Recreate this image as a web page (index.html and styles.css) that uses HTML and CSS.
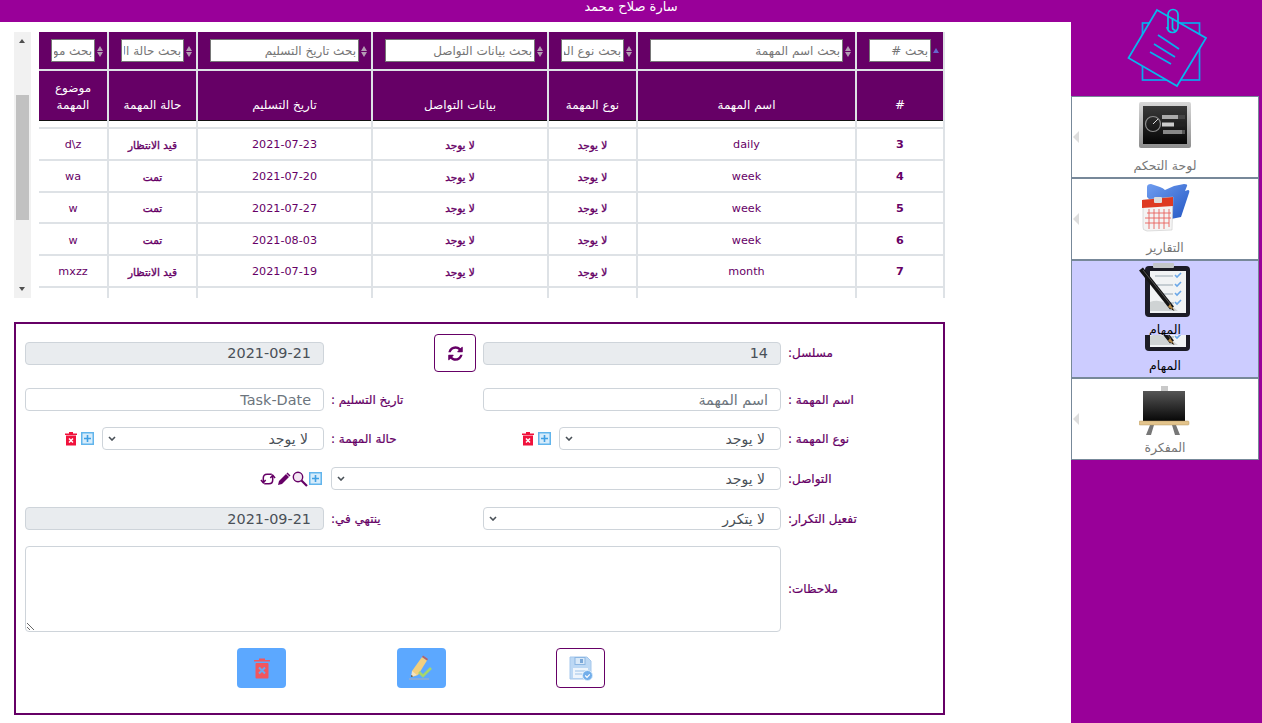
FILE: index.html
```html
<!DOCTYPE html>
<html lang="ar" dir="rtl">
<head>
<meta charset="utf-8">
<title>المهام</title>
<link rel="stylesheet" href="styles.css">
</head>
<body>
<svg class="defs" aria-hidden="true">
  <defs>
    <linearGradient id="logoGrad" x1="0" y1="0" x2="0" y2="1"><stop offset="0" stop-color="#00d8e8"/><stop offset="1" stop-color="#0a8cf5"/></linearGradient>
    <linearGradient id="dashGrad" x1="0" y1="0" x2="0" y2="1"><stop offset="0" stop-color="#3a3a3a"/><stop offset="1" stop-color="#050505"/></linearGradient>
    <linearGradient id="bevelGrad" x1="0" y1="0" x2="0" y2="1"><stop offset="0" stop-color="#d8d8d8"/><stop offset="1" stop-color="#8d8d8d"/></linearGradient>
    <linearGradient id="boardGrad" x1="0" y1="0" x2="0" y2="1"><stop offset="0" stop-color="#565656"/><stop offset="1" stop-color="#050505"/></linearGradient>
    <linearGradient id="folderGrad" x1="0" y1="0" x2="1" y2="1"><stop offset="0" stop-color="#6f9df0"/><stop offset="1" stop-color="#2457c4"/></linearGradient>
    <symbol id="clipboard" viewBox="0 0 52 58">
      <rect x="6" y="5" width="45" height="51" rx="4" fill="#1c1c26"/>
      <rect x="11" y="10" width="36" height="42" fill="#f1f3f4"/>
      <path d="M11 41q12-5 28 9H11z" fill="#cfd3d4"/>
      <rect x="14" y="2" width="21" height="5" rx="1" fill="#c3c6c8"/>
      <path d="M16 15h18M18 24h16M24 33h10M30 42h5" stroke="#c5cdd2" stroke-width="2"/>
      <path d="M36 14l2 2 4-4M36 23l2 2 4-4M36 32l2 2 4-4M36 41l2 2 4-4" stroke="#6aa7e8" stroke-width="1.6" fill="none"/>
      <path d="M2 8l31 39" stroke="#141414" stroke-width="5"/>
      <path d="M4 9l28 35" stroke="#555" stroke-width="1"/>
      <path d="M31 43l4.500 6.500-6.500-3.500z" fill="#b78a45"/>
      <path d="M33 47l2.500 3-3-1.500z" fill="#111"/>
    </symbol>
  </defs>
</svg>

<aside class="sidebar">
  <div class="logo">
    <svg width="80" height="80" viewBox="56 8 80 80" fill="none" stroke="url(#logoGrad)" stroke-width="1.700">
      <rect x="71.500" y="23" width="57" height="57" stroke="#09a8ef"/>
      <path d="M86 10l49 28-29 48-48.500-28z" fill="#990099" stroke="#06b8ee"/>
      <path d="M97 30V14.500a5 5 0 0 1 10 0V27a5.500 5.500 0 0 1-11 0 5.500 5.500 0 0 0 11 0M101.500 18v10a2.500 2.500 0 0 0 3 2" stroke="#06c4ea"/>
      <path d="M87 35l21 14M83 44l21 13M79 52l21 12" stroke="#07b0ef"/>
    </svg>
  </div>
  <nav class="menu">
    <a class="menu-item">
      <svg class="menu-icon" viewBox="0 0 52 58">
        <rect x="0" y="5" width="52" height="46" rx="2" fill="url(#bevelGrad)"/>
        <rect x="4" y="9" width="44" height="38" fill="url(#dashGrad)"/>
        <circle cx="14" cy="27" r="7.500" fill="none" stroke="#8d8d8d" stroke-width="1.200"/>
        <path d="M14 27l5-5" stroke="#ddd"/>
        <rect x="23" y="18" width="23" height="4" fill="#444"/><rect x="23" y="18" width="16" height="4" fill="#aaa"/>
        <rect x="23" y="25.500" width="23" height="4" fill="#222"/><rect x="23" y="25.500" width="12" height="4" fill="#ccc"/>
        <rect x="24" y="33" width="22" height="4" fill="#555"/><rect x="24" y="33" width="19" height="4" fill="#888"/>
      </svg>
      <span class="menu-label">لوحة التحكم</span>
    </a>
    <a class="menu-item">
      <svg class="menu-icon" viewBox="0 0 52 58">
        <path d="M8 8q0-3 4-3l9 3q3 1 5 3l9-4 10-2q4 0 3 2l-2 5 3-1q2 0 1 3l-8 24-10 2-14-12-10-10z" fill="url(#folderGrad)"/>
        <path d="M4 21l30-3-1 33-25 1q-5-1-4-4z" fill="#f4f4f4" stroke="#c9c9c9" stroke-width=".6"/>
        <path d="M3 21l31-3v9L3 29z" fill="#de3a22"/>
        <rect x="15" y="18" width="8" height="6" rx="1" fill="#ddd"/>
        <path d="M8 34h24M6 39h26M6 44h24M10 30v20M15 30v20M20 30v20M25 30v20M30 30v18" stroke="#e8605c" stroke-width=".9"/>
      </svg>
      <span class="menu-label">التقارير</span>
    </a>
    <a class="menu-item active">
      <svg class="menu-icon" viewBox="0 0 52 58"><use href="#clipboard"/></svg>
      <span class="menu-label">المهام</span>
      <svg class="menu-icon slice" viewBox="0 40 52 17"><use href="#clipboard" width="52" height="58"/></svg>
      <span class="menu-label second">المهام</span>
    </a>
    <a class="menu-item">
      <svg class="menu-icon" viewBox="0 0 52 58">
        <rect x="22" y="7" width="7" height="6" fill="#c9c9c9"/>
        <rect x="4" y="12" width="42" height="31" fill="url(#boardGrad)"/>
        <path d="M11 46l-4 10h5l3-10zM37 46l4 10h-5l-3-10z" fill="#777"/>
        <rect x="0" y="42" width="50" height="4" rx="1" fill="#e3c48c" stroke="#b79a65" stroke-width=".5"/>
      </svg>
      <span class="menu-label">المفكرة</span>
    </a>
  </nav>
</aside>

<div class="content">
  <header class="topbar">سارة صلاح محمد</header>
  <main class="main">
    <section class="grid-panel">
      <div class="table-clip">
        <table class="tasks">
          <colgroup>
            <col class="c-num"><col class="c-name"><col class="c-type"><col class="c-contact"><col class="c-date"><col class="c-status"><col class="c-subject">
          </colgroup>
          <thead>
            <tr class="search-row">
              <th class="sort-active"><input type="text" placeholder="بحث #"></th>
              <th><input type="text" placeholder="بحث اسم المهمة"></th>
              <th><input type="text" placeholder="بحث نوع المهمة"></th>
              <th><input type="text" placeholder="بحث بيانات التواصل"></th>
              <th><input type="text" placeholder="بحث تاريخ التسليم"></th>
              <th><input type="text" placeholder="بحث حالة المهمة"></th>
              <th><input type="text" placeholder="بحث موضوع المهمة"></th>
            </tr>
            <tr class="title-row">
              <th>#</th><th>اسم المهمة</th><th>نوع المهمة</th><th>بيانات التواصل</th><th>تاريخ التسليم</th><th>حالة المهمة</th><th>موضوع المهمة</th>
            </tr>
          </thead>
          <tbody>
            <tr class="sliver"><td></td><td></td><td></td><td></td><td></td><td></td><td></td></tr>
            <tr><td class="num">3</td><td>daily</td><td class="b">لا يوجد</td><td class="b">لا يوجد</td><td>2021-07-23</td><td class="b">قيد الانتظار</td><td>d\z</td></tr>
            <tr><td class="num">4</td><td>week</td><td class="b">لا يوجد</td><td class="b">لا يوجد</td><td>2021-07-20</td><td class="b">تمت</td><td>wa</td></tr>
            <tr><td class="num">5</td><td>week</td><td class="b">لا يوجد</td><td class="b">لا يوجد</td><td>2021-07-27</td><td class="b">تمت</td><td>w</td></tr>
            <tr><td class="num">6</td><td>week</td><td class="b">لا يوجد</td><td class="b">لا يوجد</td><td>2021-08-03</td><td class="b">تمت</td><td>w</td></tr>
            <tr><td class="num">7</td><td>month</td><td class="b">لا يوجد</td><td class="b">لا يوجد</td><td>2021-07-19</td><td class="b">قيد الانتظار</td><td>mxzz</td></tr>
            <tr><td></td><td></td><td></td><td></td><td></td><td></td><td></td></tr>
          </tbody>
        </table>
      </div>
      <div class="scrollbar" aria-hidden="true">
        <span class="sb-btn up"></span>
        <span class="sb-track"><span class="sb-thumb"></span></span>
        <span class="sb-btn down"></span>
      </div>
    </section>

    <form class="task-form">
      <label class="lbl">مسلسل:</label>
      <input class="ctl" type="text" value="14" disabled>
      <button class="btn-outline refresh" type="button" aria-label="تحديث">
        <svg width="17" height="17" viewBox="0 0 1792 1792"><path fill="#660066" d="M1639 1056q0 5-1 7-64 268-268 434.500t-478 166.500q-146 0-282.500-55t-243.500-157l-129 129q-19 19-45 19t-45-19-19-45v-448q0-26 19-45t45-19h448q26 0 45 19t19 45-19 45l-137 137q71 66 161 102t187 36q134 0 250-65t186-179q11-17 53-117 8-23 30-23h192q13 0 22.500 9.500t9.500 22.500zm25-800v448q0 26-19 45t-45 19h-448q-26 0-45-19t-19-45 19-45l138-138q-148-137-349-137-134 0-250 65t-186 179q-11 17-53 117-8 23-30 23h-199q-13 0-22.500-9.500t-9.500-22.500v-7q65-268 270-434.500t480-166.500q146 0 284 55.500t245 156.500l130-129q19-19 45-19t45 19 19 45z"/></svg>
      </button>
      <input class="ctl" type="text" value="2021-09-21" disabled>

      <label class="lbl">اسم المهمة :</label>
      <input class="ctl" type="text" placeholder="اسم المهمة">
      <label class="lbl">تاريخ التسليم :</label>
      <input class="ctl" type="text" placeholder="Task-Date">

      <label class="lbl">نوع المهمة :</label>
      <div class="with-tools">
        <select class="ctl sel short"><option>لا يوجد</option></select>
        <span class="tools">
          <svg class="ti" viewBox="0 0 13 15"><rect x=".75" y=".75" width="11.500" height="11.500" fill="#d6ecfb" stroke="#62b5ec" stroke-width="1.500" transform="translate(0 1)"/><path d="M6.500 4v7M3 7.500h7" stroke="#3f9fe3" stroke-width="1.600"/></svg>
          <svg class="tt" viewBox="0 0 12 15"><path d="M0 2.500h12v1.500H0zM4 1h4v1.500H4z" fill="#f0123c"/><rect x="1" y="4.500" width="10" height="10" fill="#f0123c"/><path d="M4 7.500l4 4M8 7.500l-4 4" stroke="#fff" stroke-width="1.500"/></svg>
        </span>
      </div>
      <label class="lbl">حالة المهمة :</label>
      <div class="with-tools">
        <select class="ctl sel short"><option>لا يوجد</option></select>
        <span class="tools">
          <svg class="ti" viewBox="0 0 13 15"><rect x=".75" y=".75" width="11.500" height="11.500" fill="#d6ecfb" stroke="#62b5ec" stroke-width="1.500" transform="translate(0 1)"/><path d="M6.500 4v7M3 7.500h7" stroke="#3f9fe3" stroke-width="1.600"/></svg>
          <svg class="tt" viewBox="0 0 12 15"><path d="M0 2.500h12v1.500H0zM4 1h4v1.500H4z" fill="#f0123c"/><rect x="1" y="4.500" width="10" height="10" fill="#f0123c"/><path d="M4 7.500l4 4M8 7.500l-4 4" stroke="#fff" stroke-width="1.500"/></svg>
        </span>
      </div>

      <label class="lbl">التواصل:</label>
      <select class="ctl sel span2"><option>لا يوجد</option></select>
      <div class="tools contact-tools">
        <svg class="ti" viewBox="0 0 13 15"><rect x=".75" y=".75" width="11.500" height="11.500" fill="#d6ecfb" stroke="#62b5ec" stroke-width="1.500" transform="translate(0 1)"/><path d="M6.500 4v7M3 7.500h7" stroke="#3f9fe3" stroke-width="1.600"/></svg>
        <svg class="tm" viewBox="0 0 16 16"><circle cx="6" cy="6" r="4.700" fill="#f3e6f3" stroke="#660066" stroke-width="1.400"/><path d="M9.500 9.500l5.500 5.500" stroke="#660066" stroke-width="2.200"/></svg>
        <svg class="tm pen" viewBox="0 0 14 14"><path d="M1 13l1-4 7-7 3 3-7 7z" fill="#660066"/><path d="M10 1l3 3" stroke="#660066" stroke-width="1.500"/></svg>
        <svg class="tm" viewBox="0 0 17 16" fill="none" stroke="#660066" stroke-width="1.600"><path d="M3.500 12V7q0-4 4-4h5"/><path d="M1 9l2.500 3L6 9"/><path d="M13.500 4v5q0 4-4 4h-5"/><path d="M11 7l2.500-3L16 7"/></svg>
      </div>

      <label class="lbl">تفعيل التكرار:</label>
      <select class="ctl sel"><option>لا يتكرر</option></select>
      <label class="lbl">ينتهي في:</label>
      <input class="ctl" type="text" value="2021-09-21" disabled>

      <label class="lbl lbl-notes">ملاحظات:</label>
      <textarea class="ctl notes"></textarea>

      <div class="actions">
        <button class="btn-outline act" type="button" aria-label="حفظ">
          <svg width="24" height="25" viewBox="0 0 24 25">
            <path d="M1 1h17l4 4v18H1z" fill="#bcd8f4" stroke="#a6c8ec"/>
            <rect x="6" y="1.500" width="10" height="7" fill="#d9e9f8" stroke="#8cb6e2"/>
            <rect x="11" y="3" width="3" height="4" fill="#7ba8d8"/>
            <rect x="4" y="12" width="15" height="10" fill="#eef5fc"/>
            <path d="M6 15h10M6 18h7" stroke="#9cc2e8"/>
            <circle cx="18.500" cy="19.500" r="5" fill="#72aeea" stroke="#d9ebfb"/>
            <path d="M16.200 19.500l1.800 1.800 2.800-3" stroke="#fff" stroke-width="1.200" fill="none"/>
          </svg>
        </button>
        <button class="btn-fill act" type="button" aria-label="تعديل">
          <svg width="24" height="26" viewBox="0 0 24 26">
            <path d="M3 16L13 2l5 3.500L9 20l-6 2z" fill="#f2cf7e"/>
            <path d="M13 2l1-1.500 5 3.500-1 1.500z" fill="#b5626a"/>
            <path d="M3 16l-1 6 6-2z" fill="#f3e3c0"/>
            <path d="M2 22l.300-2 2 1.300z" fill="#444"/>
            <path d="M10 17l4 4 8-8" fill="none" stroke="#a4d66e" stroke-width="2.600"/>
            <path d="M0 24h20" stroke="#9db0c6" stroke-width="1.200"/>
          </svg>
        </button>
        <button class="btn-fill act" type="button" aria-label="حذف">
          <svg width="16" height="21" viewBox="0 0 16 21">
            <path d="M0 2h16v1.500H0zM5 .500h6V2H5z" fill="#f2565e"/>
            <rect x="1.500" y="5" width="13" height="15.500" rx="1" fill="#f2565e"/>
            <path d="M5 9.500l6 6M11 9.500l-6 6" stroke="#6aa8ef" stroke-width="2"/>
          </svg>
        </button>
      </div>
    </form>
  </main>
</div>
</body>
</html>
```

FILE: styles.css
```css
* { box-sizing: border-box; }
html, body { height: 100%; }
body {
  margin: 0;
  display: flex;
  overflow: hidden;
  background: #fff;
  font-family: "DejaVu Sans", sans-serif;
  color: #660066;
}
.defs { position: absolute; width: 0; height: 0; }

/* sidebar */
.sidebar { flex: 0 0 191px; height: 100%; background: #990099; }
.logo { height: 96px; display: flex; justify-content: center; padding-top: 8px; }
.menu { width: 188px; margin-right: 3px; display: flex; flex-direction: column; }
.menu-item {
  position: relative;
  display: flex;
  flex-direction: column;
  align-items: center;
  height: 82px;
  background: #fff;
  border: 1px solid #778899;
}
.menu-item::before {
  content: "";
  position: absolute;
  left: 1px;
  top: 34px;
  border: 6.5px solid transparent;
  border-left: 0;
  border-right: 6px solid #ddd;
}
.menu-icon { width: 52px; height: 58px; flex: none; }
.menu-label { font-size: 12.500px; line-height: 20px; height: 20px; margin-top: 1px; color: #777; }
.menu-item.active { height: 118px; background: #ccccff; }
.menu-item.active::before { display: none; }
.menu-item.active .menu-label { color: #000; }
.menu-icon.slice { height: 17px; margin-top: -5px; }
.menu-label.second { margin-top: 4px; }

/* top bar */
.content { flex: 1; min-width: 0; display: flex; flex-direction: column; }
.topbar {
  height: 22px;
  flex: none;
  background: #990099;
  color: #fff;
  font-size: 13px;
  line-height: 13px;
  text-align: center;
  padding-left: 191px;
}
.main { padding: 10px 126px 0 14px; }

/* data grid */
.grid-panel { display: flex; height: 266px; gap: 8px; }
.scrollbar { width: 17px; flex: none; display: flex; flex-direction: column; background: #f1f1f1; }
.sb-btn { height: 17px; flex: none; position: relative; }
.sb-btn::after {
  content: "";
  position: absolute;
  left: 5px;
  border: 3.5px solid transparent;
}
.sb-btn.up::after { top: 7px; border-bottom: 4px solid #505050; border-top: 0; }
.sb-btn.down::after { top: 6px; border-top: 4px solid #505050; border-bottom: 0; }
.sb-track { flex: 1; padding: 46px 2px 0; }
.sb-thumb { display: block; height: 125px; background: #c1c1c1; }
.table-clip { width: 906px; flex: none; overflow: hidden; }
.tasks { width: 906px; table-layout: fixed; border-collapse: collapse; font-size: 11.200px; }
.c-num { width: 88px; } .c-name { width: 219px; } .c-type { width: 89px; }
.c-contact { width: 176px; } .c-date { width: 175px; } .c-status { width: 89px; } .c-subject { width: 70px; }
.tasks th { background: #660066; color: #fff; font-weight: normal; border: 2px solid #dee2e6; border-top: 0; position: relative; font-size: 12px; }
.search-row th { height: 38px; padding: 0 12px; }
.search-row input {
  display: block;
  width: 100%;
  height: 23px;
  border: 1px solid #767676;
  padding: 0 2px;
  font: 12px "DejaVu Sans", sans-serif;
  background: #fff;
}
.search-row input::placeholder { color: #757575; opacity: 1; }
.search-row th::after, .search-row th::before {
  content: "";
  position: absolute;
  right: 4px;
  border: 3px solid transparent;
}
.search-row th::before { top: 14px; border-top: 0; border-bottom: 5px solid #b39cb3; }
.search-row th::after { top: 20px; border-bottom: 0; border-top: 5px solid #b39cb3; }
.search-row th.sort-active::before { top: 16px; border-bottom-color: #6666cc; }
.search-row th.sort-active::after { display: none; }
.title-row th { height: 50px; padding: 0 10px 6px; vertical-align: bottom; line-height: 17px; border-bottom: 1px solid #111; }
.tasks td { height: 31.750px; padding: 2px 4px 0; border: 2px solid #dee2e6; text-align: center; }
.tasks tr.sliver td { height: 8px; padding: 0; border-top: 0; }
.tasks td.num { font-weight: bold; }
.tasks td.b { -webkit-text-stroke: .35px #660066; font-size: 10.500px; }
.tasks tbody tr:last-child td { border-bottom: 0; }

/* form */
.task-form {
  margin-top: 24px;
  width: 931px;
  height: 393px;
  border: 2px solid #660066;
  padding: 10px 0 0 9px;
  display: grid;
  grid-template-columns: 155px 298px 145px 299px;
  grid-template-rows: 38px 23px 24px 24px 23px 86px 40px;
  column-gap: 7px;
  row-gap: 16px;
  align-items: start;
  justify-content: start;
}
.lbl { font-size: 12px; line-height: 25px; height: 25px; text-align: left; justify-self: stretch; -webkit-text-stroke: .2px #660066; }
.task-form > .lbl:nth-child(1), .task-form > .ctl:nth-child(2), .task-form > .ctl:nth-child(4) { align-self: center; }
.lbl-notes { align-self: center; }
.ctl {
  width: 100%;
  height: 23px;
  border: 1px solid #ced4da;
  border-radius: 4px;
  padding: 0 12px;
  background: #fff;
  color: #495057;
  font: 14.400px "DejaVu Sans", sans-serif;
}
.ctl:disabled { background: #e9ecef; opacity: 1; }
.ctl::placeholder { color: #6c757d; opacity: 1; }
.sel {
  appearance: none;
  -webkit-appearance: none;
  padding: 0 15px 0 20px;
  font-size: 14px;
  background: #fff url("data:image/svg+xml,%3Csvg xmlns='http://www.w3.org/2000/svg' width='8' height='5'%3E%3Cpath d='M1 1l3 3 3-3' fill='none' stroke='%23495057' stroke-width='1.600'/%3E%3C/svg%3E") no-repeat left 5px top 8px;
}
.with-tools { display: flex; align-items: flex-start; gap: 8px; }
.short { width: 222px; flex: none; }
.tools { display: flex; align-items: center; gap: 4px; height: 23px; }
.ti { width: 13px; height: 15px; flex: none; }
.tt { width: 12px; height: 15px; flex: none; }
.tm { width: 16px; height: 16px; flex: none; }
.pen { width: 14px; height: 14px; }
.span2 { grid-column: span 2; }
.contact-tools { gap: 1px; margin-right: 2px; }
.notes { grid-column: 2 / span 3; height: 86px; resize: both; display: block; }
.actions { grid-column: 1 / -1; display: flex; gap: 110.500px; padding-right: 338px; }
.act { width: 49px; height: 40px; }
.btn-outline, .btn-fill {
  display: flex;
  align-items: center;
  justify-content: center;
  padding: 0;
  border-radius: 4px;
}
.btn-outline { background: #fff; border: 1px solid #660066; }
.btn-fill { background: #5ca8ff; border: 0; }
.refresh { width: 42px; height: 38px; justify-self: start; }
```
